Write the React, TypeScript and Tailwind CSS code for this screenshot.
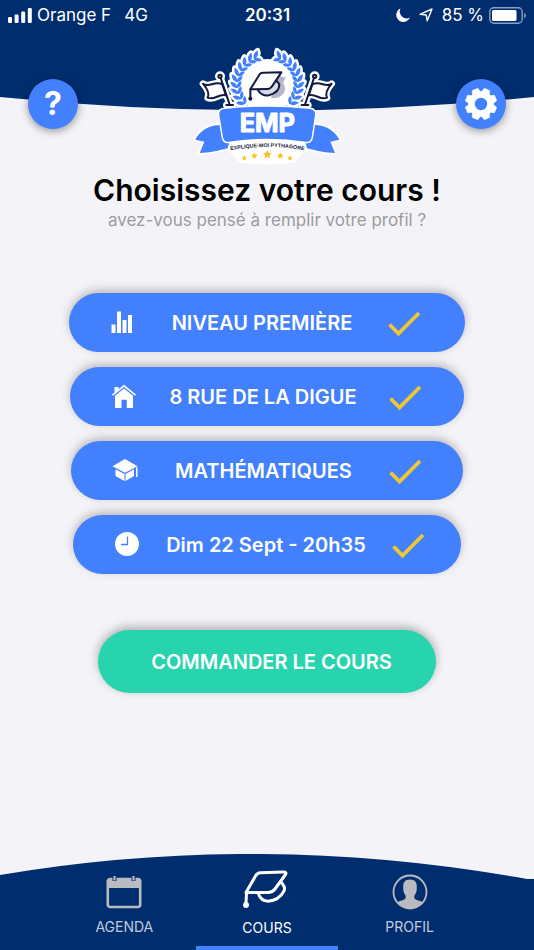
import React from "react";

const NAVY = "#002d6e";
const BLUE = "#4280fd";
const INK = "#14193f";

function Signal() {
  return (
    <svg viewBox="0 0 24 15" className="h-[15px] w-6" fill="#fff" aria-hidden="true">
      <rect x="0" y="9" width="4" height="6" rx="1.2" />
      <rect x="6.6" y="6.5" width="4" height="8.5" rx="1.2" />
      <rect x="13.2" y="3.5" width="4" height="11.5" rx="1.2" />
      <rect x="19.8" y="0" width="4" height="15" rx="1.2" />
    </svg>
  );
}

function StatusBar() {
  return (
    <div className="grid h-[30px] grid-cols-[1fr_auto_1fr] items-center pr-[7px] pl-2 text-[17px] leading-5 text-white">
      <div className="flex items-center gap-[5px]">
        <Signal />
        <span>Orange F</span>
        <span className="ml-2">4G</span>
      </div>
      <span className="font-semibold">20:31</span>
      <div className="flex items-center justify-end gap-[5px]">
        <svg viewBox="0 0 14 14" className="mr-1 h-[14px] w-[14px]" fill="#fff" aria-hidden="true">
          <path d="M4.500 0.500A7 7 0 1 0 13.800 9.500 6.800 6.800 0 0 1 4.500 0.500z" />
        </svg>
        <svg viewBox="0 0 14 14" className="mr-1 h-[14px] w-[14px]" fill="none" stroke="#fff" strokeWidth="1.4" strokeLinejoin="round" aria-hidden="true">
          <path d="M13 1L8.2 12.8 7.2 7 1 6.4z" />
        </svg>
        <span className="whitespace-nowrap">85 %</span>
        <svg viewBox="0 0 38 17" className="h-[17px] w-[38px]" aria-hidden="true">
          <rect x="0.8" y="0.8" width="32.4" height="15.4" rx="4" fill="none" stroke="#8d9fc4" strokeWidth="1.4" />
          <rect x="3" y="3" width="24.5" height="11" rx="1.6" fill="#fff" />
          <path d="M35.2 6v5.2q1.8-.7 1.8-2.6T35.2 6z" fill="#8d9fc4" />
        </svg>
      </div>
    </div>
  );
}

const leafAngles = [140, 152, 164, 176, 188, 200, 212, 224, 236, 247];

function Branch() {
  return (
    <g>
      {leafAngles.map((a) => {
        const rad = (a * Math.PI) / 180;
        const x = 241 + Math.cos(rad) * 91;
        const y = 118 + Math.sin(rad) * 85;
        return (
          <g key={a} transform={`translate(${x} ${y}) rotate(${a + 90})`}>
            <path d="M-5 -1C-4 -11 4 -18 15 -19C15 -9 8 -1 -5 2z" />
            <path d="M-5 1C-3 10 5 14 14 14C14 6 8 0 -5 -2z" />
          </g>
        );
      })}
    </g>
  );
}

function Flag() {
  return (
    <g strokeLinejoin="round" strokeLinecap="round">
      <path d="M48 116C66 130 82 106 106 118L117 151C96 144 82 168 62 158C68 146 60 130 48 116z" />
      <path d="M100 96L128 179M118 180H138" />
      <circle cx="99" cy="94" r="5" />
    </g>
  );
}

const tail = "M106 240C70 238 38 256 25 284L52 290L38 324C66 324 90 318 122 310L128 288z";
const banner =
  "M112 192Q241 178 370 192Q386 195 384 210L374 276Q371 293 357 290Q241 272 125 290Q111 293 108 276L97 210Q95 194 112 192z";
const star = "M0 -13L4 -4.5 13 -3.5 6.5 3 8 12 0 7.5 -8 12 -6.5 3 -13 -3.5 -4 -4.5z";
const stars = [
  { x: 172, y: 339, s: 0.62 },
  { x: 202, y: 332, s: 0.74 },
  { x: 241, y: 328, s: 1 },
  { x: 280, y: 332, s: 0.74 },
  { x: 309, y: 339, s: 0.62 },
];

function Logo() {
  const mirror = "translate(482 0) scale(-1 1)";
  return (
    <svg viewBox="0 0 480 375" className="h-[125px] w-40" role="img" aria-label="EMP Explique-moi Pythagore">
      <g fill="#fff" stroke="#fff" strokeWidth="20" strokeLinejoin="round">
        <g strokeWidth="15">
          <Branch />
        </g>
        <Flag />
        <path d={tail} strokeWidth="12" />
        <g transform={mirror}>
          <g strokeWidth="15">
            <Branch />
          </g>
          <Flag />
          <path d={tail} strokeWidth="12" />
        </g>
        <circle cx="241" cy="124" r="72" />
        <path d="M128 290H354V312Q330 318 322 342Q241 356 160 342Q150 318 128 312z" />
      </g>
      <g fill={BLUE}>
        <Branch />
        <path d={tail} />
        <g transform={mirror}>
          <Branch />
          <path d={tail} />
        </g>
      </g>
      <g fill="#fff" stroke={INK} strokeWidth="6">
        <Flag />
        <g transform={mirror}>
          <Flag />
        </g>
      </g>
      <path d="M276 92L296 98L288 114Q300 128 289 146Q276 162 252 158z" fill="#b4b7c9" />
      <g fill="#fff" stroke={INK} strokeWidth="6" strokeLinejoin="round" strokeLinecap="round">
        <path d="M212 134Q224 154 246 151Q278 142 277 118L268 106z" fill="#d9dbe5" />
        <path d="M190 133L218 88Q221 83 228 83L283 82L255 124Q250 132 242 132z" />
        <path d="M190 134V160" />
        <circle cx="190" cy="161" r="3" fill={INK} />
      </g>
      <path d={banner} fill={BLUE} stroke="#fff" strokeWidth="9" />
      <path d={banner} fill={BLUE} />
      <text x="241" y="261" textAnchor="middle" fontSize="76" fontWeight="700" fill="#fff" stroke="#fff" strokeWidth="3" strokeLinejoin="round">
        EMP
      </text>
      <path id="motto" d="M120 318Q241 294 362 318" fill="none" />
      <text fontSize="16" fontWeight="700" fill={INK} textAnchor="middle" fontFamily="'Liberation Sans', sans-serif">
        <textPath href="#motto" startOffset="50%">
          EXPLIQUE-MOI PYTHAGORE
        </textPath>
      </text>
      {stars.map((p) => (
        <path key={p.x} d={star} transform={`translate(${p.x} ${p.y}) scale(${p.s})`} fill="#f7c325" />
      ))}
    </svg>
  );
}

const roundButton =
  "mt-[34px] flex h-[50px] w-[50px] items-center justify-center rounded-full bg-[#4280fd] text-white shadow-[0_2px_8px_rgba(0,0,0,0.4)]";

function Gear() {
  const teeth = [0, 45, 90, 135, 180, 225, 270, 315];
  return (
    <svg viewBox="-17 -17 34 34" className="h-[34px] w-[34px]" aria-hidden="true">
      {teeth.map((a) => (
        <path key={a} d="M-4.500 -10L-3 -15.700H3L4.500 -10z" transform={`rotate(${a + 22.5})`} fill="#fff" stroke="#fff" strokeWidth="0.6" strokeLinejoin="round" />
      ))}
      <circle r="9.500" fill="none" stroke="#fff" strokeWidth="6.600" />
    </svg>
  );
}

function Header() {
  return (
    <header className="grid">
      <svg viewBox="0 0 534 112" preserveAspectRatio="none" className="col-start-1 row-start-1 h-28 w-full" aria-hidden="true">
        <path d="M0 0H534V97Q267 124 0 97z" fill={NAVY} />
      </svg>
      <div className="col-start-1 row-start-1">
        <StatusBar />
        <div className="grid grid-cols-[1fr_auto_1fr] items-start px-7 pt-[15px]">
          <button type="button" aria-label="Aide" className={roundButton}>
            <span className="text-[32px] leading-none font-bold">?</span>
          </button>
          <Logo />
          <button type="button" aria-label="Réglages" className={`${roundButton} justify-self-end`}>
            <Gear />
          </button>
        </div>
      </div>
    </header>
  );
}

function BarsIcon() {
  return (
    <svg viewBox="0 0 26 26" className="h-[26px] w-[26px] shrink-0" fill="#fff" aria-hidden="true">
      <path d="M1.500 14.500h4v8.500h-4zM7 1.500h4V23H7zM12.500 10h4v13h-4zM18 5h4v18h-4z" />
    </svg>
  );
}

function HouseIcon() {
  return (
    <svg viewBox="0 0 26 26" className="h-[26px] w-[26px] shrink-0" fill="#fff" aria-hidden="true">
      <path d="M3.500 3h4v3l-4 3.500z" />
      <path d="M1.500 11.200L13 1.800l11.500 9.400" fill="none" stroke="#fff" strokeWidth="1.600" />
      <path d="M4 11.800L13 4.500l9 7.300V24h-6.200v-8.200h-5.300V24H4z" />
    </svg>
  );
}

function SchoolIcon() {
  return (
    <svg viewBox="0 0 26 26" className="h-[26px] w-[26px] shrink-0" fill="#fff" aria-hidden="true">
      <path d="M13 1L25.500 8.200 13 14.800.500 8.200z" />
      <path d="M3.500 11.200l9 4.800v7l-9-5zM13.500 16l8.500-4.800V18l-8.500 5zM24 9.500h1.500V19H24z" />
    </svg>
  );
}

function ClockIcon() {
  return (
    <svg viewBox="0 0 26 26" className="h-[26px] w-[26px] shrink-0" aria-hidden="true">
      <circle cx="13" cy="12" r="12" fill="#fff" />
      <path d="M13.500 4.500v8H7" fill="none" stroke={BLUE} strokeWidth="1.300" />
    </svg>
  );
}

function Check() {
  return (
    <svg viewBox="0 0 33 26" className="mt-[3px] h-[26px] w-[33px] shrink-0" fill="none" stroke="#f0c733" strokeWidth="3.800" aria-hidden="true">
      <path d="M1.500 13.500L10.500 22.500 31 2" />
    </svg>
  );
}

const choices = [
  { label: "NIVEAU PREMIÈRE", icon: <BarsIcon />, box: "w-[396px] pl-[41px] pr-11" },
  { label: "8 RUE DE LA DIGUE", icon: <HouseIcon />, box: "w-[394px] pl-[41px] pr-[42px]" },
  { label: "MATHÉMATIQUES", icon: <SchoolIcon />, box: "w-[392px] pl-[41px] pr-[41px]" },
  { label: "Dim 22 Sept - 20h35", icon: <ClockIcon />, box: "w-[388px] pl-[41px] pr-9" },
];

function CapIcon() {
  return (
    <svg viewBox="0 0 60 50" className="h-[50px] w-[60px]" fill="none" stroke="#fff" strokeWidth="3" strokeLinejoin="round" strokeLinecap="round" aria-hidden="true">
      <path d="M9 30.500L18.500 14Q20 11 23.500 10.800L46.500 10Q50 10 48.500 12.500L38 27Q35.500 30.500 31 30.500z" />
      <path d="M21.500 32Q24 39 31 39.200Q42 38.500 47 29Q49 24.500 43.500 20" />
      <path d="M9.500 31L9 41" />
      <circle cx="9" cy="43" r="1.500" fill="#fff" />
    </svg>
  );
}

function CalendarIcon() {
  return (
    <svg viewBox="0 0 36 34" className="h-[34px] w-9" aria-hidden="true">
      <rect x="1.800" y="4" width="32.400" height="28" rx="2.500" fill="none" stroke="#b9bbc0" strokeWidth="2.600" />
      <path d="M1.500 4.500h33V13h-33z" fill="#b9bbc0" />
      <path d="M8.500 1v5M27.500 1v5" stroke={NAVY} strokeWidth="4" />
      <path d="M8.500 1v4.500M27.500 1v4.500" stroke="#b9bbc0" strokeWidth="2.200" />
    </svg>
  );
}

function PersonIcon() {
  return (
    <svg viewBox="0 0 36 36" className="h-9 w-9" aria-hidden="true">
      <circle cx="18" cy="18" r="16.500" fill="none" stroke="#b9bbc0" strokeWidth="1.800" />
      <path
        d="M18 5.500C12.500 5.500 10.800 9 11.300 14C11 17 12 19.500 13.500 21.500C14.200 24.500 13 25.500 10.500 26.300C8 27 6.200 27.500 5.500 28.600A16.300 16.300 0 0 0 30.500 28.600C29.800 27.500 28 27 25.500 26.300C23 25.500 21.800 24.500 22.500 21.500C24 19.500 25 17 24.700 14C25.200 9 23.500 5.500 18 5.500z"
        fill="#b9bbc0"
      />
    </svg>
  );
}

function TabBar() {
  return (
    <footer className="mt-auto grid">
      <svg viewBox="0 0 534 96" preserveAspectRatio="none" className="col-start-1 row-start-1 h-24 w-full" aria-hidden="true">
        <path d="M0 21Q260 -23 527 25H534V96H0z" fill={NAVY} />
      </svg>
      <nav className="col-start-1 row-start-1 grid grid-cols-3 px-[53px] text-[14px] leading-5 text-[#c3cbdc]">
        <a href="#agenda" className="flex flex-col items-center pt-[21px]">
          <CalendarIcon />
          <span className="mt-2">AGENDA</span>
        </a>
        <a href="#cours" aria-current="page" className="flex flex-col items-center border-b-4 border-[#4280fd] pt-2 text-white">
          <CapIcon />
          <span className="mt-[6px]">COURS</span>
        </a>
        <a href="#profil" className="flex flex-col items-center pt-5">
          <PersonIcon />
          <span className="mt-[7px]">PROFIL</span>
        </a>
      </nav>
    </footer>
  );
}

export default function App() {
  return (
    <div className="flex min-h-screen flex-col bg-[#f4f4f8] font-['Inter',sans-serif]">
      <Header />
      <main className="flex flex-col items-center">
        <h1 className="text-[30px] leading-10 font-semibold text-black">Choisissez votre cours !</h1>
        <p className="text-[17px] leading-5 text-[#9b9b9e]">avez-vous pensé à remplir votre profil ?</p>
        <div className="mt-[63px] flex flex-col items-center gap-[15px]">
          {choices.map((c) => (
            <button
              key={c.label}
              type="button"
              className={`${c.box} flex h-[59px] items-center rounded-full bg-[#4280fd] text-[20px] font-semibold text-white shadow-[0_-3px_10px_rgba(60,40,40,0.3)]`}
            >
              {c.icon}
              <span className="flex-1 text-center whitespace-nowrap">{c.label}</span>
              <Check />
            </button>
          ))}
        </div>
        <button
          type="button"
          className="mt-14 h-[63px] w-[338px] rounded-full bg-[#27d4ae] pl-[9px] text-[20px] font-semibold text-white shadow-[0_-3px_10px_rgba(40,40,40,0.35)]"
        >
          COMMANDER LE COURS
        </button>
      </main>
      <TabBar />
    </div>
  );
}
